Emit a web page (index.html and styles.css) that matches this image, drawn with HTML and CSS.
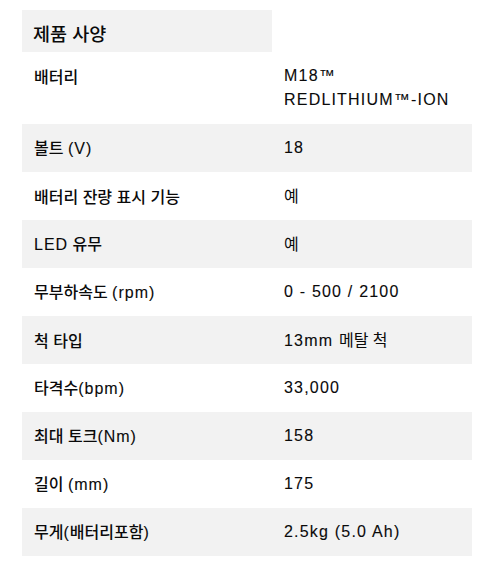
FILE: index.html
```html
<!DOCTYPE html>
<html lang="ko">
<head>
<meta charset="utf-8">
<title>제품 사양</title>
<link rel="stylesheet" href="styles.css">
</head>
<body>
<section class="specs">
  <h2 class="specs-title">제품 사양</h2>
  <div class="spec-table">
    <div class="row tall"><div class="label">배터리</div><div class="value">M18™<br>REDLITHIUM™-ION</div></div>
    <div class="row alt"><div class="label">볼트 <span class="en">(V)</span></div><div class="value">18</div></div>
    <div class="row"><div class="label">배터리 잔량 표시 기능</div><div class="value"><span class="ko">예</span></div></div>
    <div class="row alt"><div class="label"><span class="en">LED</span> 유무</div><div class="value"><span class="ko">예</span></div></div>
    <div class="row"><div class="label">무부하속도 <span class="en">(rpm)</span></div><div class="value">0 - 500 / 2100</div></div>
    <div class="row alt"><div class="label">척 타입</div><div class="value">13mm <span class="ko">메탈 척</span></div></div>
    <div class="row"><div class="label">타격수<span class="en">(bpm)</span></div><div class="value">33,000</div></div>
    <div class="row alt"><div class="label">최대 토크<span class="en">(Nm)</span></div><div class="value">158</div></div>
    <div class="row"><div class="label">길이 <span class="en">(mm)</span></div><div class="value">175</div></div>
    <div class="row alt"><div class="label">무게<span class="en">(</span>배터리포함<span class="en">)</span></div><div class="value">2.5kg (5.0 Ah)</div></div>
  </div>
</section>
</body>
</html>
```

FILE: styles.css
```css
html, body {
  margin: 0;
  padding: 0;
  background: #ffffff;
}

body {
  font-family: "Liberation Sans", "Noto Sans CJK KR", Arial, sans-serif;
  color: #0a0a0a;
}

.specs {
  margin: 10px 0 0 22px;
  width: 450px;
}

.specs-title {
  margin: 0;
  width: 250px;
  height: 42px;
  box-sizing: border-box;
  padding: 3px 11px 0;
  display: flex;
  align-items: center;
  background: #f2f2f2;
  font-family: "Noto Sans CJK KR", "Liberation Sans", sans-serif;
  font-size: 18.5px;
  font-weight: 500;
}

.spec-table {
  display: flex;
  flex-direction: column;
}

.row {
  display: grid;
  grid-template-columns: 250px 1fr;
  align-items: center;
  height: 48px;
  line-height: 24px;
}

.row.tall {
  height: 72px;
  align-items: start;
  padding-top: 12px;
  box-sizing: border-box;
}

.row.alt {
  background: #f2f2f2;
}

.label {
  padding-left: 12px;
  font-family: "Noto Sans CJK KR", "Liberation Sans", sans-serif;
  font-size: 16px;
  font-weight: 500;
}

.label .en {
  font-family: "Liberation Sans", sans-serif;
  font-size: 16px;
  font-weight: 400;
  letter-spacing: 1px;
  -webkit-text-stroke: 0.1px #0a0a0a;
}

.value {
  padding-left: 12px;
  font-family: "Liberation Sans", "Noto Sans CJK KR", sans-serif;
  font-size: 16px;
  letter-spacing: 1.2px;
  -webkit-text-stroke: 0.1px #0a0a0a;
}

.value .ko {
  font-family: "Noto Sans CJK KR", sans-serif;
  font-size: 16px;
  font-weight: 400;
  letter-spacing: 0;
  -webkit-text-stroke: 0;
}
```
